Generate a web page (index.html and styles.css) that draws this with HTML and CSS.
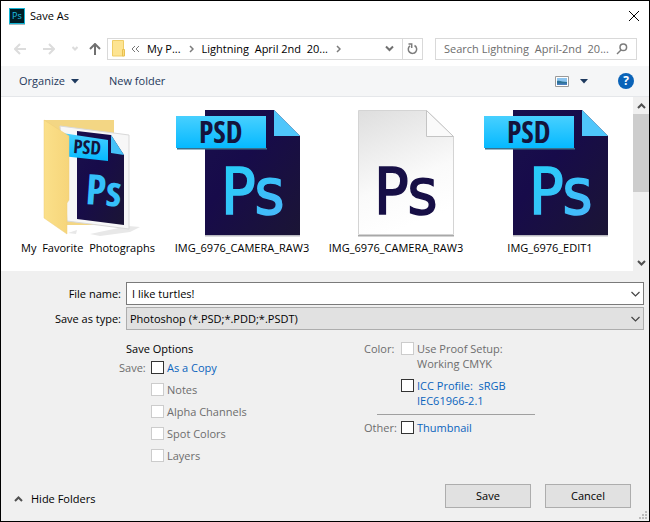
FILE: index.html
```
<!DOCTYPE html>
<html lang="en">

<head>
    <meta charset="UTF-8">
    <meta name="viewport" content="width=device-width, initial-scale=1.0">
    <link rel="stylesheet" href="styles.css">
    <title>Save As</title>
</head>

<body>
    <!-- shared gradients and the PSD file icon -->
    <svg class="defs" width="0" height="0" aria-hidden="true">
        <defs>
            <linearGradient id="navy" x1="0" y1="0" x2="1" y2="1">
                <stop offset="0" stop-color="#19104c" />
                <stop offset="0.4" stop-color="#170b4a" />
                <stop offset="1" stop-color="#1b1535" />
            </linearGradient>
            <linearGradient id="banner" x1="0" y1="0" x2="0" y2="1">
                <stop offset="0" stop-color="#48d0ff" />
                <stop offset="1" stop-color="#05b9ff" />
            </linearGradient>
            <linearGradient id="letters" x1="0" y1="0" x2="1" y2="1">
                <stop offset="0" stop-color="#21d0f8" />
                <stop offset="1" stop-color="#4db5fb" />
            </linearGradient>
            <linearGradient id="paper" x1="0" y1="0" x2="0.3" y2="1">
                <stop offset="0" stop-color="#dedede" />
                <stop offset="0.65" stop-color="#fafafa" />
                <stop offset="1" stop-color="#ffffff" />
            </linearGradient>
            <linearGradient id="folder" x1="0" y1="0" x2="1" y2="0">
                <stop offset="0" stop-color="#fbe08a" />
                <stop offset="1" stop-color="#f6d57a" />
            </linearGradient>
            <symbol id="psd-file" viewBox="2 0 132 128">
                <path d="M31 126h95v1.500H31z" fill="#b9b9c0" />
                <path d="M31 1h69l26 26v99H31z" fill="url(#navy)" />
                <path d="M100 1l26 26h-26z" fill="#4fc6fb" />
                <path d="M3 39h90v1.500H3z" fill="#39708c" />
                <path d="M2 7h90v32H2z" fill="url(#banner)" />
                <text x="25" y="34" class="psd-text" font-size="30">PSD</text>
                <text x="47" y="105" class="ps-text" font-size="64" fill="url(#letters)" stroke="url(#letters)">Ps</text>
            </symbol>
        </defs>
    </svg>

    <main class="dialog">
        <header class="title-bar">
            <svg class="app-icon" width="16" height="17" viewBox="0 0 16 17" aria-hidden="true">
                <rect y="1" width="16" height="16" fill="#a9b8bd" />
                <rect x="0.500" y="0.500" width="15" height="15" fill="#001d26" stroke="#12b5d6" />
                <text x="3" y="11" font-size="9" class="app-text">Ps</text>
            </svg>
            <h1>Save As</h1>
            <button class="icon-btn" aria-label="Close">
                <svg width="10" height="10" viewBox="0 0 10 10"><path d="M0 0l10 10M10 0L0 10" stroke="#000" /></svg>
            </button>
        </header>

        <nav class="nav-bar">
            <div class="arrows">
                <button class="icon-btn step" aria-label="Back" disabled>
                    <svg width="12" height="12" viewBox="0 0 12 12"><path d="M12 6H1M6 1L1 6l5 5" class="stroke light" /></svg>
                </button>
                <button class="icon-btn step" aria-label="Forward" disabled>
                    <svg width="12" height="12" viewBox="0 0 12 12"><path d="M0 6h11M6 1l5 5-5 5" class="stroke light" /></svg>
                </button>
                <button class="icon-btn" aria-label="Recent locations" disabled>
                    <svg width="6" height="12" viewBox="0 0 6 12"><path d="M0.500 4L3 6.500 5.500 4" class="stroke light" /></svg>
                </button>
                <button class="icon-btn" aria-label="Up">
                    <svg width="12" height="12" viewBox="0 0 12 12"><path d="M6 12V1M1 6l5-5 5 5" class="stroke dark" /></svg>
                </button>
            </div>
            <div class="address">
                <svg width="14" height="17" viewBox="0 0 14 17" aria-hidden="true">
                    <path d="M0.500 0.500h11v15.500h-11z" fill="#fde492" stroke="#efcd66" />
                    <path d="M10.500 9.500h2v6.500h-2z" fill="#fbdc80" stroke="#e8c04f" />
                </svg>
                <button class="crumb more" aria-label="More folders">
                    <svg width="9" height="8" viewBox="0 0 9 8"><path d="M4 1L1 4l3 3M8 1L5 4l3 3" class="stroke thin" /></svg>
                </button>
                <button class="crumb">My P...</button>
                <svg width="5" height="8" viewBox="0 0 5 8" aria-hidden="true"><path d="M1 1l3 3-3 3" class="stroke gray" /></svg>
                <button class="crumb">Lightning&nbsp; April 2nd&nbsp; 20...</button>
                <svg width="5" height="8" viewBox="0 0 5 8" aria-hidden="true"><path d="M1 1l3 3-3 3" class="stroke gray" /></svg>
                <button class="icon-btn history" aria-label="Previous locations">
                    <svg width="9" height="7" viewBox="0 0 9 7"><path d="M1 1.500L4.500 5 8 1.500" class="stroke dark" /></svg>
                </button>
                <button class="icon-btn refresh" aria-label="Refresh">
                    <svg width="11" height="12" viewBox="0 0 11 12"><path d="M7.500 2.500a4.200 4.200 0 1 1-4.500 0.300" class="stroke gray" /><path d="M1.500 1h3.200v4" class="stroke gray" /></svg>
                </button>
            </div>
            <div class="search">
                <input type="text" aria-label="Search" placeholder="Search Lightning&nbsp; April-2nd&nbsp; 20...">
                <svg width="12" height="12" viewBox="0 0 12 12" aria-hidden="true"><circle cx="7.300" cy="4.300" r="3.300" class="stroke gray" /><path d="M5 7L1 11" class="stroke gray" /></svg>
            </div>
        </nav>

        <div class="toolbar">
            <button class="tool">Organize
                <svg width="8" height="5" viewBox="0 0 8 5" aria-hidden="true"><path d="M0 0h8L4 4.500z" fill="#1e3a5f" /></svg>
            </button>
            <button class="tool">New folder</button>
            <button class="tool view" aria-label="Change view">
                <svg width="14" height="11" viewBox="0 0 14 11">
                    <path d="M0.500 0.500h13v10h-13z" fill="#fff" stroke="#9a9a9a" />
                    <path d="M2 2h10v7H2z" fill="#8cc4ef" />
                    <path d="M2 5c3-1 5 1 10 1v3H2z" fill="#2e7396" />
                    <path d="M2 7.500h10V9H2z" fill="#4a7fc0" />
                </svg>
                <svg width="8" height="5" viewBox="0 0 8 5"><path d="M0 0h8L4 4.500z" fill="#1e3a5f" /></svg>
            </button>
            <button class="tool help" aria-label="Help">?</button>
        </div>

        <section class="browser">
            <ul class="files">
                <li>
                    <svg width="132" height="128" viewBox="0 0 132 128" aria-hidden="true">
                        <path d="M68 125l38-8 12 1-10 5-30 4zM46 124l9-3-1 4z" fill="#e8e8e8" />
                        <path d="M22 11h70v105H40z" fill="#f3d684" />
                        <path d="M38 17l69 9v94l-62-8z" fill="#f7f7f7" stroke="#d9d9d9" />
                        <path d="M55 22l34 4 13 20v70l-47-6z" fill="url(#navy)" />
                        <path d="M89 26l13 20-13-2z" fill="#45c1f8" />
                        <path d="M40 24l46 7v21l-46-5z" fill="url(#banner)" />
                        <text x="51" y="44" class="psd-text" font-size="19" transform="rotate(4 51 44)">PSD</text>
                        <text x="63" y="95" class="psd-text" font-size="42" fill="url(#letters)" transform="rotate(4 63 95)">Ps</text>
                        <path d="M22 11l25 16v64l-2 3v31L22 109z" fill="url(#folder)" stroke="#efcd78" stroke-width="0.500" />
                    </svg>
                    <span>My&nbsp; Favorite&nbsp; Photographs</span>
                </li>
                <li>
                    <svg width="132" height="128" aria-hidden="true"><use href="#psd-file" /></svg>
                    <span>IMG_6976_CAMERA_RAW3</span>
                </li>
                <li>
                    <svg width="132" height="128" viewBox="1 0 132 128" aria-hidden="true">
                        <path d="M29 126h96v1.500H29z" fill="#a8a8a8" />
                        <path d="M29.500 1.500h68l27 26v98h-95z" fill="url(#paper)" stroke="#d4d4d4" />
                        <path d="M97.500 1.500l27 26h-27z" fill="#fafafa" stroke="#c4c4c4" />
                        <text x="45" y="105" class="ps-text" font-size="64" fill="#170f46" stroke="#170f46">Ps</text>
                    </svg>
                    <span>IMG_6976_CAMERA_RAW3</span>
                </li>
                <li>
                    <svg width="132" height="128" aria-hidden="true"><use href="#psd-file" /></svg>
                    <span>IMG_6976_EDIT1</span>
                </li>
            </ul>
            <div class="scrollbar">
                <button class="icon-btn" aria-label="Scroll up">
                    <svg width="9" height="6" viewBox="0 0 9 6"><path d="M1 5l3.500-3.500L8 5" class="stroke scroll" /></svg>
                </button>
                <div class="thumb"></div>
                <button class="icon-btn" aria-label="Scroll down">
                    <svg width="9" height="6" viewBox="0 0 9 6"><path d="M1 1l3.500 3.500L8 1" class="stroke scroll" /></svg>
                </button>
            </div>
        </section>

        <form class="fields">
            <label for="fileName">File name:</label>
            <div class="combo">
                <input type="text" id="fileName" value="I like turtles!">
                <svg width="9" height="6" viewBox="0 0 9 6" aria-hidden="true"><path d="M0.500 1l4 4 4-4" class="stroke chevron" /></svg>
            </div>
            <label for="fileType">Save as type:</label>
            <div class="combo">
                <select id="fileType">
                    <option>Photoshop (*.PSD;*.PDD;*.PSDT)</option>
                </select>
                <svg width="9" height="6" viewBox="0 0 9 6" aria-hidden="true"><path d="M0.500 1l4 4 4-4" class="stroke chevron" /></svg>
            </div>
        </form>

        <section class="options">
            <div class="save-options">
                <h2>Save Options</h2>
                <div class="group">
                    <span class="caption">Save:</span>
                    <div class="checks">
                        <label><input type="checkbox">As a Copy</label>
                        <label><input type="checkbox" disabled>Notes</label>
                        <label><input type="checkbox" disabled>Alpha Channels</label>
                        <label><input type="checkbox" disabled>Spot Colors</label>
                        <label><input type="checkbox" disabled>Layers</label>
                    </div>
                </div>
            </div>
            <div class="color-options">
                <div class="group">
                    <span class="caption">Color:</span>
                    <div class="checks">
                        <label><input type="checkbox" disabled><span>Use Proof Setup:<br>Working CMYK</span></label>
                        <label><input type="checkbox"><span>ICC Profile:&nbsp; sRGB<br>IEC61966-2.1</span></label>
                    </div>
                </div>
                <hr>
                <div class="group">
                    <span class="caption">Other:</span>
                    <div class="checks">
                        <label><input type="checkbox">Thumbnail</label>
                    </div>
                </div>
            </div>
        </section>

        <footer>
            <button class="hide-folders">
                <svg width="9" height="6" viewBox="0 0 9 6" aria-hidden="true"><path d="M1 5l3.500-3.500L8 5" class="stroke scroll" /></svg>
                Hide Folders
            </button>
            <button class="push">Save</button>
            <button class="push">Cancel</button>
            <svg class="grip" width="8" height="8" viewBox="0 0 8 8" aria-hidden="true">
                <path d="M6 0h2v2H6zM3 3h2v2H3zM6 3h2v2H6zM0 6h2v2H0zM3 6h2v2H3zM6 6h2v2H6z" fill="#bcbcbc" />
            </svg>
        </footer>
    </main>
</body>

</html>
```
FILE: styles.css
```
* {
    box-sizing: border-box;
}

body {
    margin: 0;
    font-family: 'Open Sans', 'Noto Sans', sans-serif;
    font-size: 11px;
    line-height: 16px;
    color: #000;
    background: #f0f0f0;
}

button,
input,
select {
    font: inherit;
    color: inherit;
}

button {
    padding: 0;
    border: none;
    background: none;
}

svg {
    display: block;
    flex: none;
}

.defs {
    position: absolute;
}

.dialog {
    display: flex;
    flex-direction: column;
    min-height: 100vh;
    border: 1px solid #000;
    background: #f0f0f0;
}

.icon-btn {
    display: flex;
    align-items: center;
    justify-content: center;
}

/* line icons */
.stroke {
    fill: none;
    stroke-width: 2;
}

.light {
    stroke: #dcdcdc;
}

.dark {
    stroke: #707070;
}

.gray {
    stroke: #7c7c7c;
    stroke-width: 1.5;
}

.thin {
    stroke: #777;
    stroke-width: 1;
}

.scroll {
    stroke: #505050;
}

.chevron {
    stroke: #444;
    stroke-width: 1.2;
}

.app-text {
    fill: #1fc0e4;
}

.psd-text {
    fill: #14143c;
    font-family: 'Liberation Sans Narrow', 'Open Sans Condensed', 'DejaVu Sans Condensed', sans-serif;
    font-weight: bold;
}

.psd-text[fill] {
    fill: #35c0fa;
}

.ps-text {
    font-family: 'DejaVu Sans Condensed', 'Open Sans', sans-serif;
    stroke-width: 1.5;
}

/* title bar */
.title-bar {
    display: flex;
    align-items: center;
    gap: 5px;
    height: 30px;
    padding: 0 10px 0 8px;
    background: #fff;
}

.title-bar h1 {
    flex: 1;
    margin: 0;
    font-size: 11px;
    font-weight: normal;
}

/* navigation */
.nav-bar {
    display: flex;
    align-items: center;
    height: 35px;
    padding: 0 12px 0 13px;
    background: #fff;
}

.arrows {
    display: flex;
    gap: 11px;
    width: 93px;
}

.step {
    margin-right: 6px;
}

.address,
.search {
    display: flex;
    align-items: center;
    height: 22px;
    border: 1px solid #d9d9d9;
}

.address {
    flex: 1;
    gap: 8px;
    padding-left: 4px;
    margin-right: 12px;
    white-space: nowrap;
}

.more {
    margin: 0 -1px 0 -3px;
}

.history {
    margin-left: auto;
}

.refresh {
    width: 20px;
    height: 20px;
    border-left: 1px solid #d9d9d9;
}

.search {
    width: 202px;
    padding: 0 8px;
}

.search input {
    flex: 1;
    min-width: 0;
    padding: 0;
    border: none;
    outline: none;
}

.search input::placeholder {
    color: #6d6d6d;
    opacity: 1;
}

/* toolbar */
.toolbar {
    display: flex;
    align-items: center;
    gap: 30px;
    height: 31px;
    padding: 0 15px 0 18px;
    border-bottom: 1px solid #e5e7ea;
    background: #f5f6f7;
    color: #1e395b;
}

.tool {
    display: flex;
    align-items: center;
    gap: 6px;
}

.view {
    gap: 11px;
    margin-left: auto;
}

.help {
    justify-content: center;
    width: 16px;
    height: 16px;
    border-radius: 50%;
    background: #0a63b8;
    color: #fff;
    font-size: 12px;
    font-weight: bold;
}

/* file list */
.browser {
    display: flex;
    background: #fff;
}

.files {
    display: flex;
    flex: 1;
    margin: 0;
    padding: 12px 6px 15px 10px;
    list-style: none;
}

.files li {
    display: flex;
    flex: 1;
    flex-direction: column;
    align-items: center;
    gap: 3px;
    min-width: 0;
    white-space: nowrap;
}

.scrollbar {
    display: flex;
    flex-direction: column;
    width: 16px;
    background: #f0f0f0;
}

.scrollbar .icon-btn {
    height: 17px;
}

.thumb {
    height: 78px;
    margin-bottom: auto;
    background: #cdcdcd;
}

/* name and type */
.fields {
    display: grid;
    grid-template-columns: 120px 1fr;
    align-items: center;
    gap: 2px 5px;
    padding: 11px 5px 0 0;
}

.fields label {
    text-align: right;
}

.combo {
    display: grid;
    align-items: center;
}

.combo > * {
    grid-area: 1 / 1;
}

.combo svg {
    justify-self: end;
    margin-right: 4px;
    pointer-events: none;
}

.combo input,
.combo select {
    width: 100%;
    height: 23px;
    padding: 0 20px 0 5px;
    border: 1px solid #7a7a7a;
    border-radius: 0;
    outline: none;
    background: #fff;
}

.combo select {
    padding-left: 3px;
    border-color: #adadad;
    background: #e1e1e1;
    appearance: none;
}

/* save options */
.options {
    display: flex;
    padding: 11px 0 0 118px;
    line-height: 15px;
}

.save-options {
    width: 245px;
}

.save-options h2 {
    margin: 0 0 4px 7px;
    font-size: 11px;
    font-weight: normal;
}

.group {
    display: flex;
    color: #6d6d6d;
}

.caption {
    width: 37px;
}

.save-options .caption {
    width: 32px;
}

.checks {
    display: flex;
    flex-direction: column;
    gap: 7px;
}

.checks label {
    display: flex;
    align-items: flex-start;
    gap: 3px;
}

.checks label:has(input:enabled) {
    color: #0a64bd;
}

.checks input {
    flex: none;
    width: 13px;
    height: 13px;
    margin: 1px 0 0;
    border: 1px solid #333;
    background: #fff;
    appearance: none;
}

.checks input:disabled {
    border-color: #ccc;
}

.checks input:checked {
    background: #0a64bd;
}

.color-options hr {
    width: 158px;
    height: 1px;
    margin: 6px 0 5px 13px;
    border: none;
    background: #a0a0a0;
}

/* bottom buttons */
footer {
    position: relative;
    display: flex;
    align-items: center;
    gap: 14px;
    margin-top: auto;
    padding: 0 18px 13px 13px;
}

.hide-folders {
    display: flex;
    align-items: center;
    gap: 8px;
    margin: 6px auto 0 0;
}

.push {
    width: 86px;
    height: 24px;
    border: 1px solid #adadad;
    background: #e1e1e1;
}

.push:hover {
    border-color: #0078d7;
    background: #e5f1fb;
}

.grip {
    position: absolute;
    right: 2px;
    bottom: 2px;
}
```
